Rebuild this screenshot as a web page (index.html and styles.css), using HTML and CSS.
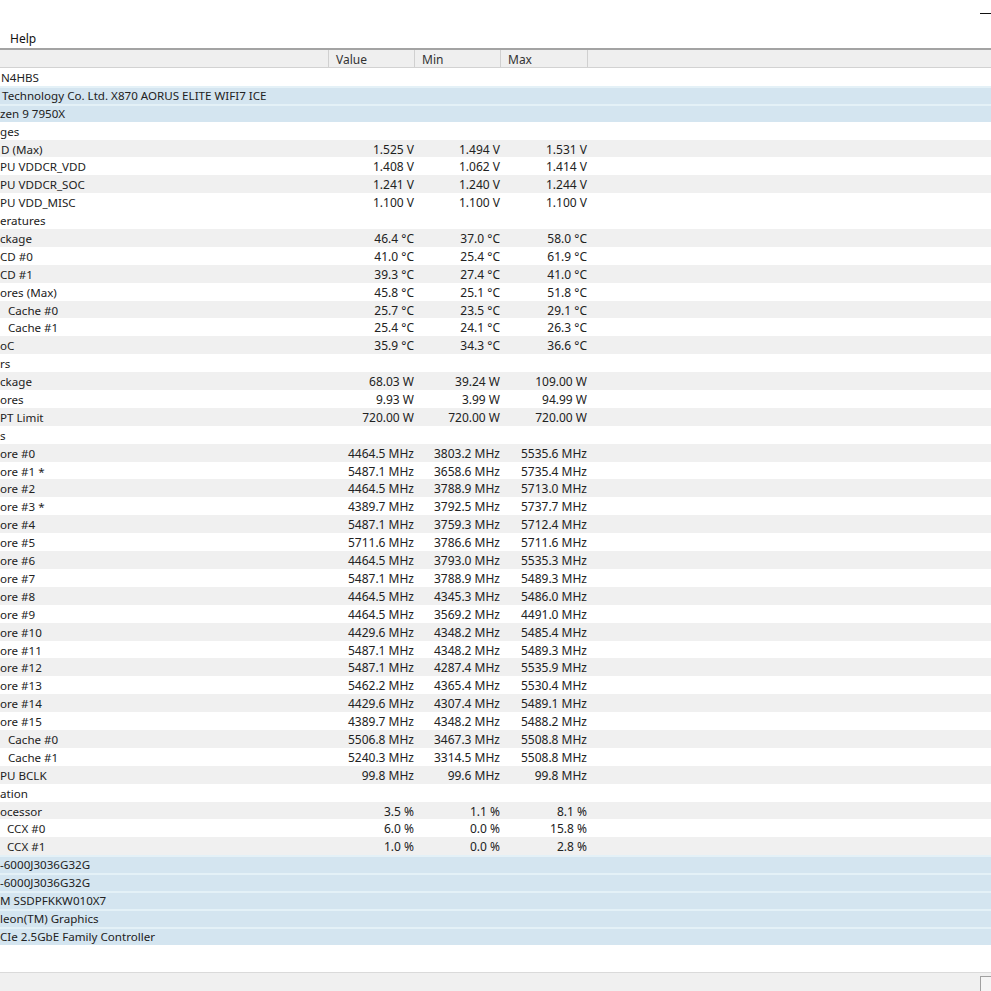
FILE: index.html
```html
<!DOCTYPE html>
<html>
<head>
<meta charset="utf-8">
<link rel="stylesheet" href="styles.css">
</head>
<body>
<div class="window">
  <div class="titlebar"><span class="minimize"></span></div>
  <div class="menubar"><span class="menu-item">Help</span></div>
  <div class="colheader">
    <div class="hcell hlabel"></div>
    <div class="hcell">Value</div>
    <div class="hcell">Min</div>
    <div class="hcell">Max</div>
    <div class="hcell hrest"></div>
  </div>
  <div class="list">
    <div class="row w"><div class="lab"><span class="t i1">N4HBS</span></div><div class="v"></div><div class="v"></div><div class="v"></div></div>
    <div class="row b"><div class="lab"><span class="t i2">Technology Co. Ltd. X870 AORUS ELITE WIFI7 ICE</span></div><div class="v"></div><div class="v"></div><div class="v"></div></div>
    <div class="row b"><div class="lab"><span class="t">zen 9 7950X</span></div><div class="v"></div><div class="v"></div><div class="v"></div></div>
    <div class="row w"><div class="lab"><span class="t">ges</span></div><div class="v"></div><div class="v"></div><div class="v"></div></div>
    <div class="row g"><div class="lab"><span class="t i1">D (Max)</span></div><div class="v">1.525 V</div><div class="v">1.494 V</div><div class="v">1.531 V</div></div>
    <div class="row w"><div class="lab"><span class="t">PU VDDCR_VDD</span></div><div class="v">1.408 V</div><div class="v">1.062 V</div><div class="v">1.414 V</div></div>
    <div class="row g"><div class="lab"><span class="t">PU VDDCR_SOC</span></div><div class="v">1.241 V</div><div class="v">1.240 V</div><div class="v">1.244 V</div></div>
    <div class="row w"><div class="lab"><span class="t">PU VDD_MISC</span></div><div class="v">1.100 V</div><div class="v">1.100 V</div><div class="v">1.100 V</div></div>
    <div class="row w"><div class="lab"><span class="t">eratures</span></div><div class="v"></div><div class="v"></div><div class="v"></div></div>
    <div class="row g"><div class="lab"><span class="t">ckage</span></div><div class="v">46.4 °C</div><div class="v">37.0 °C</div><div class="v">58.0 °C</div></div>
    <div class="row w"><div class="lab"><span class="t">CD #0</span></div><div class="v">41.0 °C</div><div class="v">25.4 °C</div><div class="v">61.9 °C</div></div>
    <div class="row g"><div class="lab"><span class="t">CD #1</span></div><div class="v">39.3 °C</div><div class="v">27.4 °C</div><div class="v">41.0 °C</div></div>
    <div class="row w"><div class="lab"><span class="t">ores (Max)</span></div><div class="v">45.8 °C</div><div class="v">25.1 °C</div><div class="v">51.8 °C</div></div>
    <div class="row g"><div class="lab"><span class="t i8">Cache #0</span></div><div class="v">25.7 °C</div><div class="v">23.5 °C</div><div class="v">29.1 °C</div></div>
    <div class="row w"><div class="lab"><span class="t i8">Cache #1</span></div><div class="v">25.4 °C</div><div class="v">24.1 °C</div><div class="v">26.3 °C</div></div>
    <div class="row g"><div class="lab"><span class="t">oC</span></div><div class="v">35.9 °C</div><div class="v">34.3 °C</div><div class="v">36.6 °C</div></div>
    <div class="row w"><div class="lab"><span class="t">rs</span></div><div class="v"></div><div class="v"></div><div class="v"></div></div>
    <div class="row g"><div class="lab"><span class="t">ckage</span></div><div class="v">68.03 W</div><div class="v">39.24 W</div><div class="v">109.00 W</div></div>
    <div class="row w"><div class="lab"><span class="t">ores</span></div><div class="v">9.93 W</div><div class="v">3.99 W</div><div class="v">94.99 W</div></div>
    <div class="row g"><div class="lab"><span class="t">PT Limit</span></div><div class="v">720.00 W</div><div class="v">720.00 W</div><div class="v">720.00 W</div></div>
    <div class="row w"><div class="lab"><span class="t">s</span></div><div class="v"></div><div class="v"></div><div class="v"></div></div>
    <div class="row g"><div class="lab"><span class="t">ore #0</span></div><div class="v">4464.5 MHz</div><div class="v">3803.2 MHz</div><div class="v">5535.6 MHz</div></div>
    <div class="row w"><div class="lab"><span class="t">ore #1 *</span></div><div class="v">5487.1 MHz</div><div class="v">3658.6 MHz</div><div class="v">5735.4 MHz</div></div>
    <div class="row g"><div class="lab"><span class="t">ore #2</span></div><div class="v">4464.5 MHz</div><div class="v">3788.9 MHz</div><div class="v">5713.0 MHz</div></div>
    <div class="row w"><div class="lab"><span class="t">ore #3 *</span></div><div class="v">4389.7 MHz</div><div class="v">3792.5 MHz</div><div class="v">5737.7 MHz</div></div>
    <div class="row g"><div class="lab"><span class="t">ore #4</span></div><div class="v">5487.1 MHz</div><div class="v">3759.3 MHz</div><div class="v">5712.4 MHz</div></div>
    <div class="row w"><div class="lab"><span class="t">ore #5</span></div><div class="v">5711.6 MHz</div><div class="v">3786.6 MHz</div><div class="v">5711.6 MHz</div></div>
    <div class="row g"><div class="lab"><span class="t">ore #6</span></div><div class="v">4464.5 MHz</div><div class="v">3793.0 MHz</div><div class="v">5535.3 MHz</div></div>
    <div class="row w"><div class="lab"><span class="t">ore #7</span></div><div class="v">5487.1 MHz</div><div class="v">3788.9 MHz</div><div class="v">5489.3 MHz</div></div>
    <div class="row g"><div class="lab"><span class="t">ore #8</span></div><div class="v">4464.5 MHz</div><div class="v">4345.3 MHz</div><div class="v">5486.0 MHz</div></div>
    <div class="row w"><div class="lab"><span class="t">ore #9</span></div><div class="v">4464.5 MHz</div><div class="v">3569.2 MHz</div><div class="v">4491.0 MHz</div></div>
    <div class="row g"><div class="lab"><span class="t">ore #10</span></div><div class="v">4429.6 MHz</div><div class="v">4348.2 MHz</div><div class="v">5485.4 MHz</div></div>
    <div class="row w"><div class="lab"><span class="t">ore #11</span></div><div class="v">5487.1 MHz</div><div class="v">4348.2 MHz</div><div class="v">5489.3 MHz</div></div>
    <div class="row g"><div class="lab"><span class="t">ore #12</span></div><div class="v">5487.1 MHz</div><div class="v">4287.4 MHz</div><div class="v">5535.9 MHz</div></div>
    <div class="row w"><div class="lab"><span class="t">ore #13</span></div><div class="v">5462.2 MHz</div><div class="v">4365.4 MHz</div><div class="v">5530.4 MHz</div></div>
    <div class="row g"><div class="lab"><span class="t">ore #14</span></div><div class="v">4429.6 MHz</div><div class="v">4307.4 MHz</div><div class="v">5489.1 MHz</div></div>
    <div class="row w"><div class="lab"><span class="t">ore #15</span></div><div class="v">4389.7 MHz</div><div class="v">4348.2 MHz</div><div class="v">5488.2 MHz</div></div>
    <div class="row g"><div class="lab"><span class="t i8">Cache #0</span></div><div class="v">5506.8 MHz</div><div class="v">3467.3 MHz</div><div class="v">5508.8 MHz</div></div>
    <div class="row w"><div class="lab"><span class="t i8">Cache #1</span></div><div class="v">5240.3 MHz</div><div class="v">3314.5 MHz</div><div class="v">5508.8 MHz</div></div>
    <div class="row g"><div class="lab"><span class="t">PU BCLK</span></div><div class="v">99.8 MHz</div><div class="v">99.6 MHz</div><div class="v">99.8 MHz</div></div>
    <div class="row w"><div class="lab"><span class="t">ation</span></div><div class="v"></div><div class="v"></div><div class="v"></div></div>
    <div class="row g"><div class="lab"><span class="t">ocessor</span></div><div class="v">3.5 %</div><div class="v">1.1 %</div><div class="v">8.1 %</div></div>
    <div class="row w"><div class="lab"><span class="t i7">CCX #0</span></div><div class="v">6.0 %</div><div class="v">0.0 %</div><div class="v">15.8 %</div></div>
    <div class="row g"><div class="lab"><span class="t i7">CCX #1</span></div><div class="v">1.0 %</div><div class="v">0.0 %</div><div class="v">2.8 %</div></div>
    <div class="row b"><div class="lab"><span class="t">-6000J3036G32G</span></div><div class="v"></div><div class="v"></div><div class="v"></div></div>
    <div class="row b"><div class="lab"><span class="t">-6000J3036G32G</span></div><div class="v"></div><div class="v"></div><div class="v"></div></div>
    <div class="row b"><div class="lab"><span class="t">M SSDPFKKW010X7</span></div><div class="v"></div><div class="v"></div><div class="v"></div></div>
    <div class="row b"><div class="lab"><span class="t">leon(TM) Graphics</span></div><div class="v"></div><div class="v"></div><div class="v"></div></div>
    <div class="row b"><div class="lab"><span class="t">CIe 2.5GbE Family Controller</span></div><div class="v"></div><div class="v"></div><div class="v"></div></div>
  </div>
  <div class="spacer"></div>
  <div class="statusbar"><span class="grip"></span></div>
</div>
</body>
</html>
```

FILE: styles.css
```css
html, body {
  margin: 0;
  padding: 0;
  background: #ffffff;
}
body {
  font-family: "Noto Sans", "Segoe UI", sans-serif;
  font-size: 12px;
  color: #222222;
  overflow: hidden;
}
.window {
  width: 991px;
  height: 991px;
  display: flex;
  flex-direction: column;
  overflow: hidden;
}
.titlebar {
  height: 29px;
  flex: none;
  display: flex;
  justify-content: flex-end;
  align-items: flex-start;
}
.minimize {
  display: block;
  width: 11px;
  height: 0;
  border-top: 1px solid #111;
  margin-top: 13px;
}
.menubar {
  height: 19px;
  flex: none;
  display: flex;
  align-items: center;
}
.menu-item {
  padding-left: 10px;
  line-height: 18px;
  color: #111;
}
.colheader {
  flex: none;
  height: 20px;
  box-sizing: border-box;
  border-top: 2px solid #a3a3a3;
  border-bottom: 1px solid #d2d2d2;
  background: #efefef;
  display: grid;
  grid-template-columns: 329px 86px 86px 87px 1fr;
}
.hcell {
  border-right: 1px solid #d0d0d0;
  padding-left: 7px;
  padding-top: 2px;
  line-height: 15px;
  color: #333;
  font-size: 12px;
}
.hrest {
  border-right: none;
}
.list {
  flex: none;
  display: flex;
  flex-direction: column;
}
.row {
  height: 17.9px;
  box-sizing: border-box;
  display: grid;
  grid-template-columns: 329px 86px 86px 87px;
  padding-top: 1px;
  line-height: 17px;
  white-space: nowrap;
}
.row.w { background: #ffffff; }
.row.g { background: #f0f0f0; }
.row.b {
  background: #d4e5f0;
  border-top: 2px solid #e4f1f7;
  padding-top: 0;
  line-height: 15px;
}
.lab {
  overflow: hidden;
  font-size: 11.6px;
}
.t {
  display: inline-block;
}
.i1 { margin-left: 1px; }
.i2 { margin-left: 2px; }
.i7 { margin-left: 7px; }
.i8 { margin-left: 8px; }
.v {
  text-align: right;
  padding-right: 1px;
}
.spacer {
  flex: 1;
}
.statusbar {
  flex: none;
  height: 18px;
  background: #f0f0f0;
  border-top: 1px solid #dadada;
  position: relative;
}
.grip {
  position: absolute;
  left: 980px;
  top: 3px;
  width: 20px;
  height: 20px;
  box-sizing: border-box;
  border: 1px solid #a0a0a0;
  background: #f5f5f5;
}
```
